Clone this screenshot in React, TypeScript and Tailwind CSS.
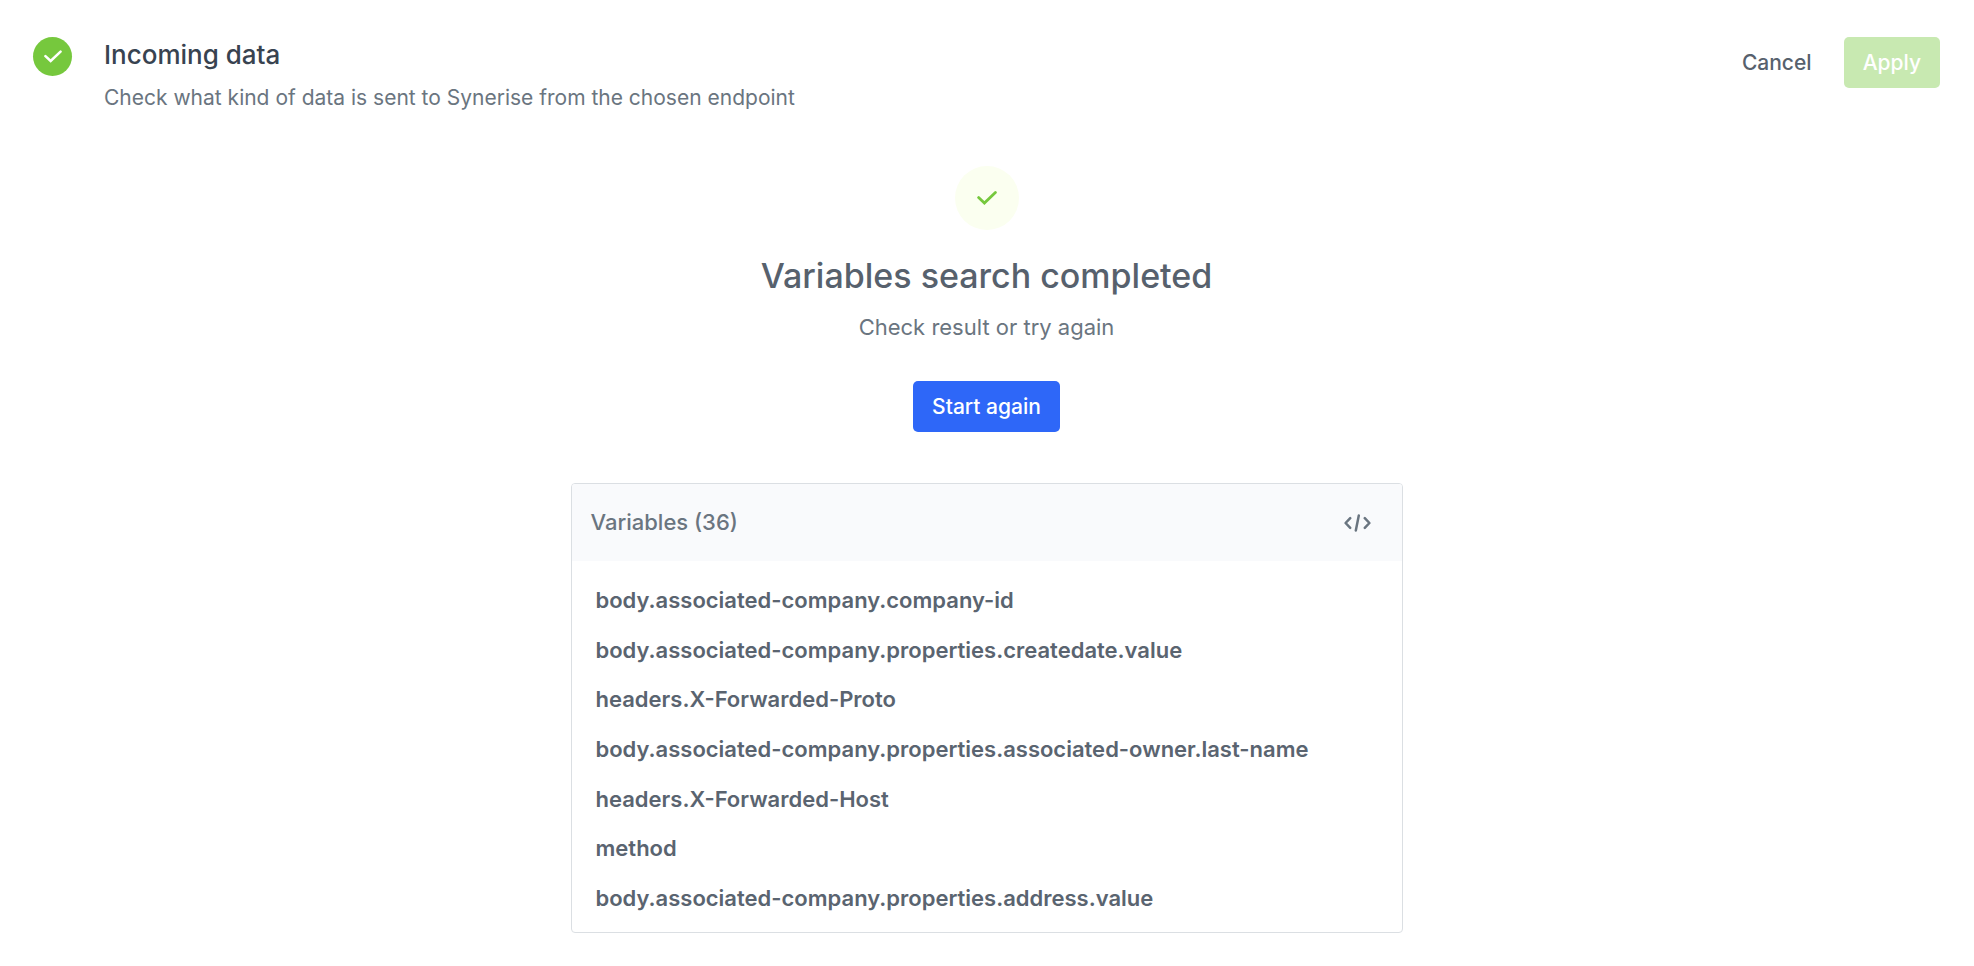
import { useState } from "react";

const variables = [
    "body.associated-company.company-id",
    "body.associated-company.properties.createdate.value",
    "headers.X-Forwarded-Proto",
    "body.associated-company.properties.associated-owner.last-name",
    "headers.X-Forwarded-Host",
    "method",
    "body.associated-company.properties.address.value",
];

type CheckProps = {
    className: string;
};

function CheckIcon({ className }: CheckProps) {
    return (
        <svg viewBox="0 0 20 14" fill="none" stroke="currentColor" strokeWidth="2.8" strokeLinecap="round" strokeLinejoin="miter" className={className} aria-hidden="true">
            <path d="M1.6 6.6 7.4 12 18.4 1.5" />
        </svg>
    );
}

function CodeIcon() {
    return (
        <svg viewBox="0 0 27 18" fill="none" stroke="currentColor" strokeWidth="2.5" strokeLinecap="round" strokeLinejoin="round" className="h-[18px] w-[27px]" aria-hidden="true">
            <path d="M6.2 4.2 1.6 9l4.6 4.8M20.8 4.2 25.4 9l-4.6 4.8M14.8 1.6 11.8 16.4" />
        </svg>
    );
}

function Header() {
    return (
        <header className="flex items-start justify-between">
            <div className="flex items-start gap-8">
                <span className="flex h-[39px] w-[39px] shrink-0 items-center justify-center rounded-full bg-[#76c83d] text-white">
                    <CheckIcon className="h-[13px] w-[18px]" />
                </span>
                <div>
                    <h1 className="text-[26px] leading-9 font-medium text-[#384350]">Incoming data</h1>
                    <p className="mt-2 text-[21px] leading-[34px] text-[#6a7580]">
                        Check what kind of data is sent to Synerise from the chosen endpoint
                    </p>
                </div>
            </div>
            <div className="flex items-center gap-4 text-[21px] font-medium">
                <button type="button" className="h-[51px] px-4 text-[#57616d]">Cancel</button>
                <button type="button" disabled className="h-[51px] rounded-[5px] bg-[#c8e9b1] px-[19px] text-white">Apply</button>
            </div>
        </header>
    );
}

function VariablesCard() {
    return (
        <section className="mt-[51px] w-full max-w-[832px] overflow-hidden rounded border border-[#dbdfe3]">
            <div className="flex h-[77px] items-center justify-between bg-[#f9fafc] px-[19px] text-[#6a7580]">
                <h3 className="text-[22px] font-medium">Variables (36)</h3>
                <button type="button" aria-label="Show code" className="px-3">
                    <CodeIcon />
                </button>
            </div>
            <ul className="grid h-[371px] auto-rows-fr items-center px-6 pt-[15px] pb-[9px]">
                {variables.map((name) => (
                    <li key={name} className="text-[22px] font-semibold text-[#5a6470]">{name}</li>
                ))}
            </ul>
        </section>
    );
}

function App() {
    const [completed, setCompleted] = useState(true);

    return (
        <div className="min-h-screen bg-white pt-[37px] pr-[34px] pb-8 pl-[33px] font-['Inter',sans-serif]">
            <Header />
            <main className="mt-[51px] flex flex-col items-center">
                <span className="flex h-16 w-16 items-center justify-center rounded-full bg-[#fbfff0] text-[#76c83d]">
                    <CheckIcon className="h-[14px] w-5" />
                </span>
                <h2 className="mt-6 text-[34px] leading-11 font-medium text-[#57616d]">Variables search completed</h2>
                <p className="mt-3 text-[22px] leading-[34px] text-[#6a7580]">Check result or try again</p>
                <button type="button" onClick={() => setCompleted(!completed)} className="mt-[37px] h-[51px] rounded-[5px] bg-[#2e67f8] px-[19px] text-[21px] font-medium text-white">
                    Start again
                </button>
                {completed && <VariablesCard />}
            </main>
        </div>
    );
}

export default App;
